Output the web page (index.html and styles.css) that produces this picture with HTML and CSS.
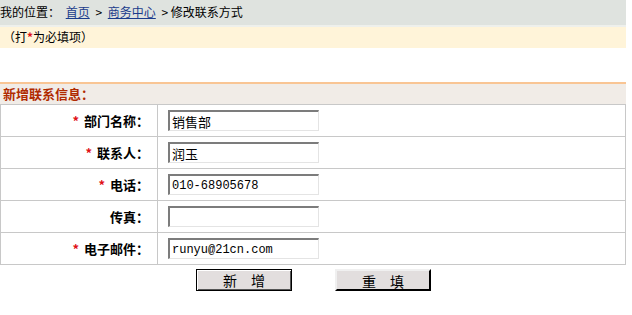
FILE: index.html
```html
<!DOCTYPE html>
<html>
<head>
    <title>修改联系方式</title>
    <meta charset="utf-8">
    <link rel="stylesheet" href="styles.css">
</head>
<body>
    <div class="crumb">我的位置： <a href="#">首页</a> &gt; <a href="#">商务中心</a> &gt; 修改联系方式</div>
    <div class="tip">（打<span class="star">*</span>为必填项）</div>

    <div class="section">
        <div class="section-title">新增联系信息：</div>
        <table class="form-table">
            <tr>
                <td class="label"><span class="star">*</span> 部门名称：</td>
                <td class="field"><input type="text" class="text" value="销售部"></td>
            </tr>
            <tr>
                <td class="label"><span class="star">*</span> 联系人：</td>
                <td class="field"><input type="text" class="text" value="润玉"></td>
            </tr>
            <tr>
                <td class="label"><span class="star">*</span> 电话：</td>
                <td class="field"><input type="text" class="text mono" value="010-68905678"></td>
            </tr>
            <tr>
                <td class="label">传真：</td>
                <td class="field"><input type="text" class="text"></td>
            </tr>
            <tr>
                <td class="label"><span class="star">*</span> 电子邮件：</td>
                <td class="field"><input type="text" class="text mono" value="runyu@21cn.com"></td>
            </tr>
        </table>
        <div class="buttons">
            <button class="btn btn-default">新　增</button>
            <button class="btn">重　填</button>
        </div>
    </div>
</body>
</html>
```

FILE: styles.css
```css
body {
    margin: 0;
    font-family: "Noto Sans CJK SC", "Liberation Sans", sans-serif;
    font-size: 12px;
    color: #000;
    background-color: #fff;
}

.crumb {
    width: 626px;
    height: 25px;
    line-height: 23px;
    background-color: #dfe3df;
    border-bottom: 2px solid #eef0ec;
}

.crumb a {
    color: #1a3c8c;
    text-decoration: underline;
    margin: 0 3px;
}

.tip {
    width: 623px;
    height: 21px;
    line-height: 19px;
    padding-left: 3px;
    background-color: #fff4d9;
}

.star {
    color: #e0101a;
    font-weight: bold;
}

.section {
    margin-top: 34px;
    width: 626px;
}

.section-title {
    height: 20px;
    line-height: 20px;
    padding-left: 3px;
    border-top: 2px solid #f9c594;
    background-color: #f1ece7;
    color: #b02a00;
    font-weight: bold;
    font-size: 13px;
}

.form-table {
    width: 626px;
    border-collapse: collapse;
    border: 1px solid #c4c4c4;
}

.form-table td {
    height: 31px;
    border: 1px solid #c8c8c8;
    padding: 0;
}

.label {
    width: 148px;
    padding-right: 8px !important;
    text-align: right;
    font-weight: bold;
    font-size: 13px;
}

.label .star {
    margin-right: 2px;
}

.field {
    padding-left: 10px !important;
}

.text {
    box-sizing: border-box;
    width: 151px;
    height: 21px;
    padding: 1px 2px 0;
    border-top: 2px solid #7c7c7c;
    border-left: 2px solid #7c7c7c;
    border-right: 1px solid #e4e4e4;
    border-bottom: 1px solid #e4e4e4;
    font-family: "Noto Sans CJK SC", sans-serif;
    font-size: 13px;
    color: #000;
    vertical-align: middle;
}

.text.mono {
    font-family: "Liberation Mono", monospace;
    font-size: 12px;
}

.buttons {
    display: flex;
    gap: 43px;
    padding: 4px 0 0 196px;
}

.btn {
    width: 96px;
    height: 22px;
    padding: 0;
    font-family: "Noto Sans CJK SC", sans-serif;
    font-size: 14px;
    background-color: #e2dede;
    border: 2px outset #f0f0f0;
    border-right-color: #555;
    border-bottom-color: #555;
    color: #000;
}

.btn-default {
    border: 1px solid #000;
    box-shadow: inset 1px 1px 0 #fff, inset -1px -1px 0 #555;
}
```
